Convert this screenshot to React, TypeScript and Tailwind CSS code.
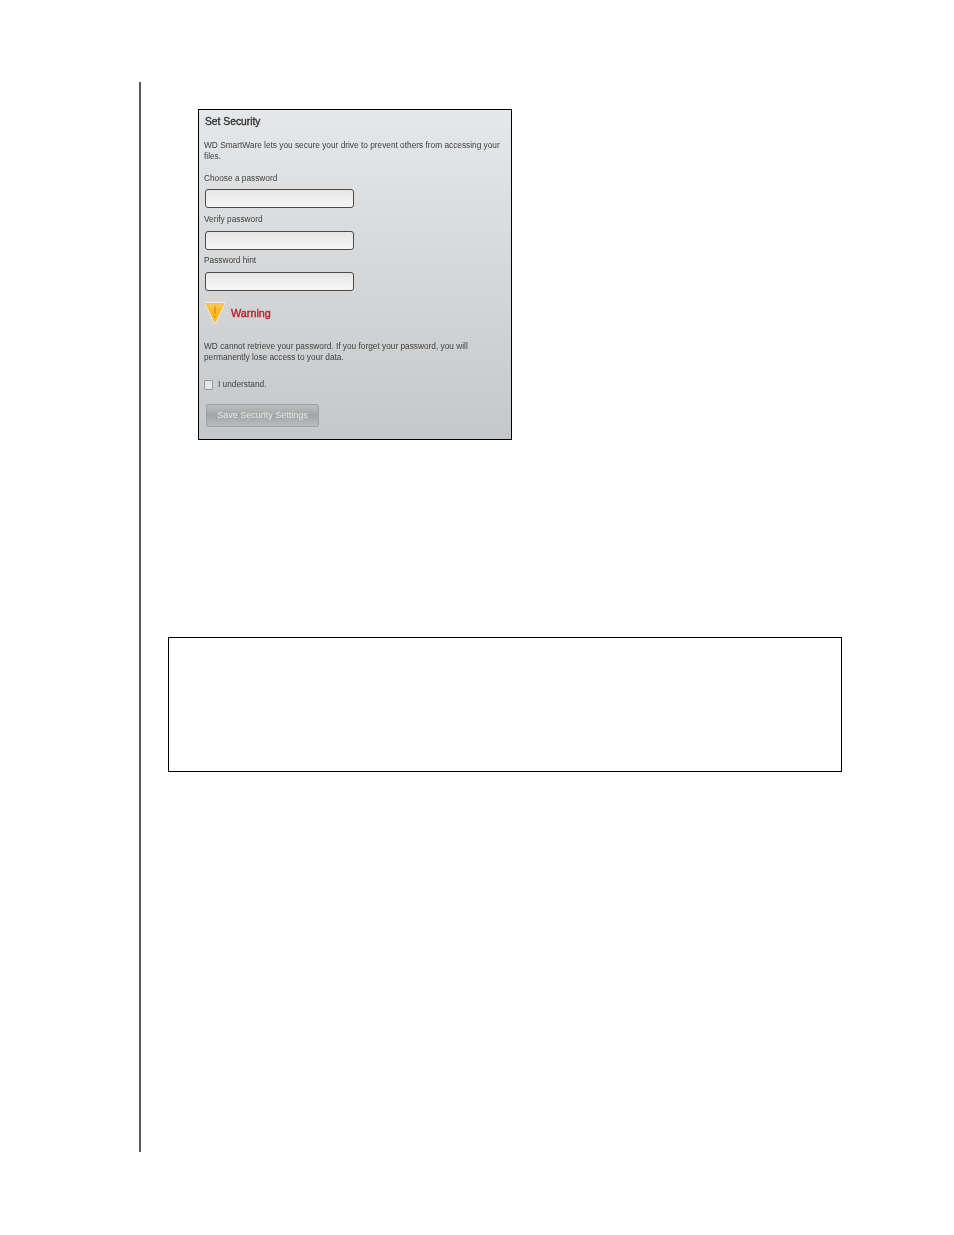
export default function App() {
  const font = { fontFamily: '"Liberation Sans", Arial, sans-serif' };
  const inputCls = "block w-[149px] h-[19px] rounded-[3px] border border-[#4a4a4a] bg-gradient-to-b from-[#e6e6e6] to-[#f6f6f6] ml-[6px]";
  return (
    <div className="w-[954px] h-[1235px] bg-white pt-[82px] pl-[139px] overflow-hidden" style={font}>
      <div className="h-[1070px] w-[700px] border-l-2 border-[#5a5a5a] pt-[27px]">
        <div className="ml-[57px] w-[314px] h-[331px] border border-black bg-gradient-to-b from-[#e6e7e9] to-[#c6c7c9]">
          <div className="text-[#3f3f3f] text-[8.3px] leading-[11px] blur-[0.3px]">
            <div className="pl-[6px] pt-[5px] text-[10.3px] leading-[14px] font-normal text-[#333] [-webkit-text-stroke:0.35px_#333]">Set Security</div>
            <p className="pl-[5px] pt-[11px] w-[305px]">WD SmartWare lets you secure your drive to prevent others from accessing your files.</p>
            <div className="pl-[5px] pt-[11px] h-[27px]">Choose a password</div>
            <div className={inputCls} />
            <div className="pl-[5px] pt-[6px] h-[23px]">Verify password</div>
            <div className={inputCls} />
            <div className="pl-[5px] pt-[5px] h-[22px]">Password hint</div>
            <div className={inputCls} />
            <div className="flex items-start pl-[5px] pt-[10px] h-[36px]">
              <svg width="22" height="24" viewBox="0 0 22 24" className="shrink-0">
                <path d="M1.5 1.5 H20.5 Q21 2 20.5 3.5 L12 21.5 Q11 23 10 21.5 L1.5 3.5 Q1 2 1.5 1.5 Z" fill="#fbb829" stroke="#ecece8" strokeWidth="1" strokeLinejoin="round" />
                <path d="M2.5 2.5 H19.5 L17.5 7 H4.5 Z" fill="#fdc64a" />
                <path d="M11 5 V13" stroke="#d3951a" strokeWidth="1.4" />
                <circle cx="11" cy="15.5" r="0.9" fill="#d3951a" />
              </svg>
              <span className="ml-[5px] mt-[5px] text-[10.8px] leading-[14px] text-[#b9232f] [-webkit-text-stroke:0.4px_#b9232f]">Warning</span>
            </div>
            <p className="pl-[5px] pt-[14px] w-[300px]">WD cannot retrieve your password. If you forget your password, you will permanently lose access to your data.</p>
            <div className="flex items-center pl-[5px] pt-[16px]">
              <div className="w-[9px] h-[10px] border border-[#9a9a9a] bg-[#e4e4e4] rounded-[1px]" />
              <span className="ml-[5px]">I understand.</span>
            </div>
            <button className="block ml-[7px] mt-[14px] w-[113px] h-[23px] rounded-[2px] border border-[#a0a1a3] bg-gradient-to-b from-[#bdbebf] via-[#a3a4a5] to-[#bbbcbd] text-[#e6e6e6] text-[9px] text-center" style={font}>Save Security Settings</button>
          </div>
        </div>
        <div className="mt-[197px] ml-[27px] w-[674px] h-[135px] border border-black bg-white" />
      </div>
    </div>
  );
}
